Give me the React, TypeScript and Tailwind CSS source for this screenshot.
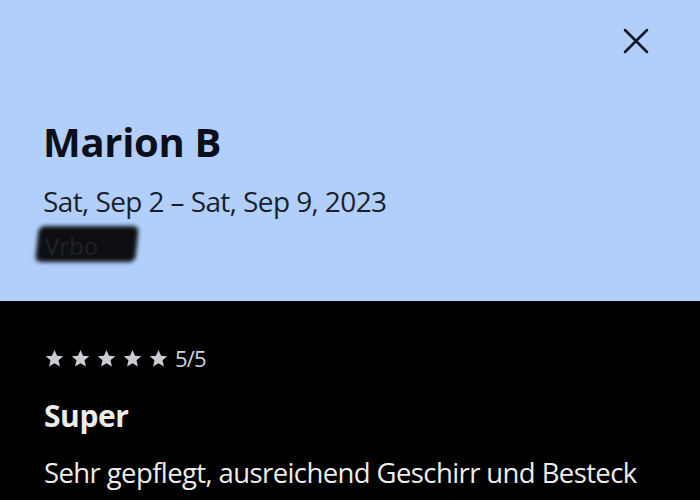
import { X } from "lucide-react";

function Star() {
  return (
    <svg viewBox="0 0 24 24" className="w-[21px] h-[21px] fill-[#c9ccd3]">
      <path d="M12 2.2l2.9 6.6 7.1.6-5.4 4.7 1.6 7-6.2-3.7-6.2 3.7 1.6-7L2 9.4l7.1-.6z" />
    </svg>
  );
}

export default function App() {
  return (
    <div className="w-[700px] h-[500px] overflow-hidden bg-black font-['Open_Sans',sans-serif]">
      {/* header */}
      <div className="h-[301px] bg-[#b2cffc] px-[43px] pt-[19px] flex flex-col">
        <div className="flex justify-end -mr-[1px]">
          <X className="w-[44px] h-[44px] text-[#111827]" strokeWidth={1.4} />
        </div>
        <h1 className="mt-[55px] text-[40px] leading-[48px] font-bold text-[#0b0f1a] tracking-[-0.3px]">
          Marion B
        </h1>
        <p className="mt-[17px] text-[28px] leading-[36px] text-[#1a1f2b] tracking-[-0.6px]">
          Sat, Sep 2 – Sat, Sep 9, 2023
        </p>
        <div className="relative mt-[7px] w-[100px] h-[36px] -ml-[6px]">
          <div className="absolute inset-0 bg-[#0d0f14] rounded-[6px] blur-[2px] -skew-x-6" />
          <span className="relative pl-[8px] text-[24px] leading-[40px] text-[#222]">Vrbo</span>
        </div>
      </div>

      {/* review */}
      <div className="px-[44px] pt-[43px] text-[#ececec]">
        <div className="flex items-center gap-[5px]">
          <Star />
          <Star />
          <Star />
          <Star />
          <Star />
          <span className="ml-[1px] text-[22px] leading-[28px] text-[#d2d4d9] tracking-[-0.8px]">5/5</span>
        </div>
        <h2 className="mt-[26px] text-[30px] leading-[36px] font-bold tracking-[-0.4px]">Super</h2>
        <p className="mt-[21px] text-[27.5px] leading-[36px] tracking-[-0.6px] whitespace-nowrap">
          Sehr gepflegt, ausreichend Geschirr und Besteck
        </p>
      </div>
    </div>
  );
}
